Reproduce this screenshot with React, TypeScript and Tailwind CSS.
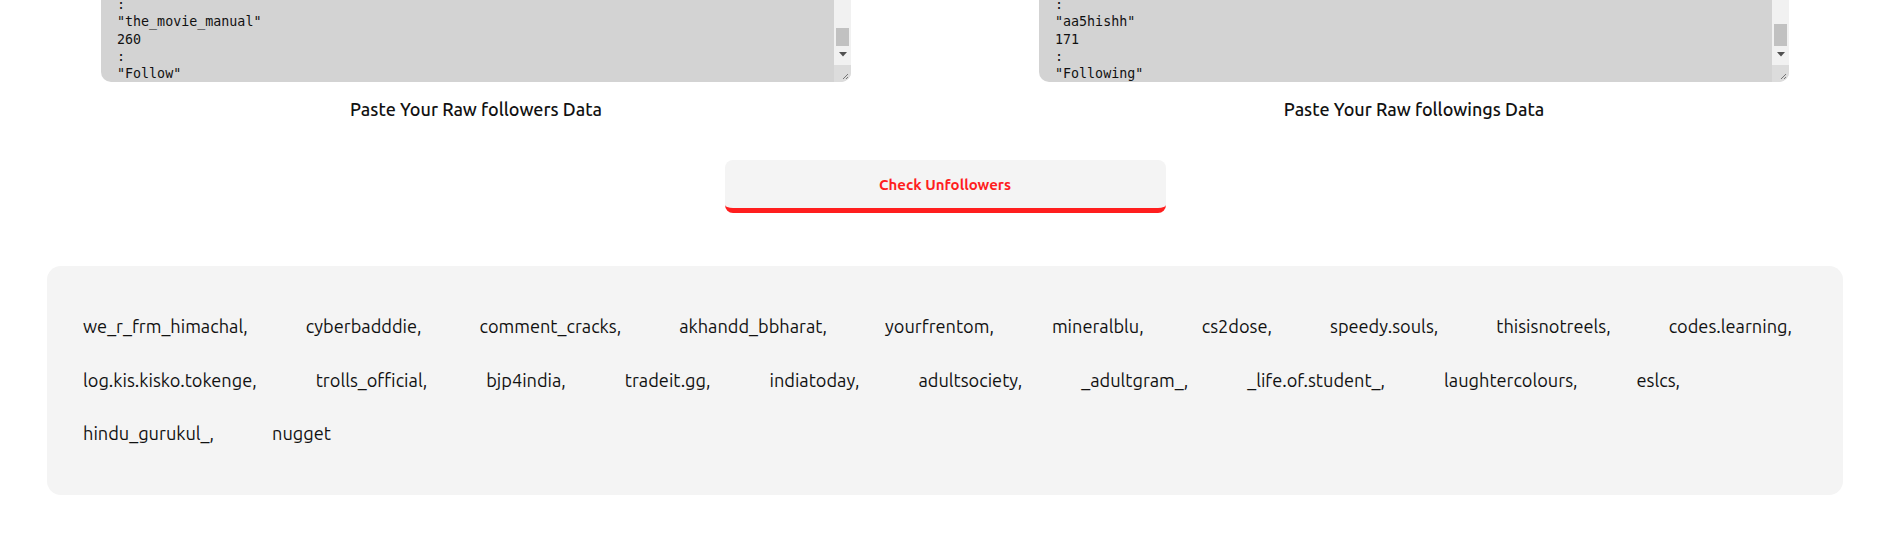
import React from "react";

const followers = [
  [
    "we_r_frm_himachal,",
    "cyberbadddie,",
    "comment_cracks,",
    "akhandd_bbharat,",
    "yourfrentom,",
    "mineralblu,",
    "cs2dose,",
    "speedy.souls,",
    "thisisnotreels,",
    "codes.learning,",
  ],
  [
    "log.kis.kisko.tokenge,",
    "trolls_official,",
    "bjp4india,",
    "tradeit.gg,",
    "indiatoday,",
    "adultsociety,",
    "_adultgram_,",
    "_life.of.student_,",
    "laughtercolours,",
    "eslcs,",
  ],
  ["hindu_gurukul_,", "nugget"],
];

function FakeTextarea({
  lines,
  thumbTop,
  thumbHeight,
}: {
  lines: string[];
  thumbTop: string;
  thumbHeight: string;
}) {
  return (
    <div className="flex h-[82px] w-[750px] overflow-hidden rounded-b-[10px] bg-[#d3d3d3]">
      <div className="flex-1 overflow-hidden pl-[16px] font-['DejaVu_Sans_Mono',monospace] text-[13.33px] leading-[17.3px] text-[#111]">
        <div className="-mt-[4px]">
          {lines.map((l, i) => (
            <div key={i} className="whitespace-pre">
              {l}
            </div>
          ))}
        </div>
      </div>
      <div className="flex w-[17px] flex-col">
        <div className="flex h-[65px] flex-col bg-[#f1f1f1]">
          <div className={`${thumbTop} ${thumbHeight} mx-[2px] bg-[#c1c1c1]`} />
          <div className="flex flex-1 items-center justify-center pb-[2px]">
            <svg width="8" height="5" viewBox="0 0 8 5">
              <polygon points="0,0 8,0 4,4.5" fill="#505050" />
            </svg>
          </div>
        </div>
        <div className="h-[17px] bg-[#dcdcdc]">
          <svg width="17" height="17" viewBox="0 0 17 17">
            <line x1="14" y1="9" x2="9" y2="14" stroke="#777" strokeWidth="1" />
            <line x1="14" y1="12" x2="12" y2="14" stroke="#777" strokeWidth="1" />
          </svg>
        </div>
      </div>
    </div>
  );
}

export default function App() {
  return (
    <div className="h-[538px] w-[1883px] overflow-hidden bg-white pl-[7px] font-['Ubuntu','Lato',sans-serif] text-[#111]">
      <div className="grid grid-cols-2">
        <div className="flex flex-col items-center">
          <FakeTextarea
            lines={[":", '"the_movie_manual"', "260", ":", '"Follow"']}
            thumbTop="mt-[28px]"
            thumbHeight="h-[18px]"
          />
          <div className="mt-[15px] h-[24px] text-[18px] font-medium leading-[24px]">
            Paste Your Raw followers Data
          </div>
        </div>
        <div className="flex flex-col items-center">
          <FakeTextarea
            lines={[":", '"aa5hishh"', "171", ":", '"Following"']}
            thumbTop="mt-[24px]"
            thumbHeight="h-[22px]"
          />
          <div className="mt-[15px] h-[24px] text-[18px] font-medium leading-[24px]">
            Paste Your Raw followings Data
          </div>
        </div>
      </div>

      <div className="mt-[39px] flex justify-center">
        <button className="flex h-[53px] w-[441px] items-center justify-center rounded-[8px] border-b-[5px] border-[#ff1e1e] bg-[#f4f4f4] pt-[2px] text-[15px] font-bold text-[#ff1e1e]">
          Check Unfollowers
        </button>
      </div>

      <div className="mx-[40px] mt-[53px] h-[229px] rounded-[14px] bg-[#f4f4f4] px-[36px] py-[34px]">
        {followers.map((row, i) => (
          <div
            key={i}
            className={`flex h-[53.5px] items-center whitespace-nowrap text-[18.2px] ${i === 1 ? "gap-[59px]" : "gap-[58px]"}`}
          >
            {row.map((name) => (
              <span key={name}>{name}</span>
            ))}
          </div>
        ))}
      </div>
    </div>
  );
}
